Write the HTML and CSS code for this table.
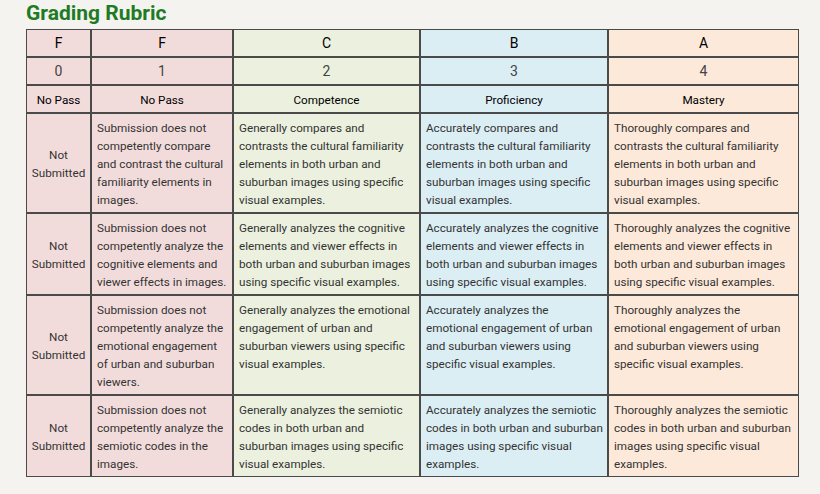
FILE: index.html
```html
<!DOCTYPE html>
<html>
<head>
<meta charset="utf-8">
<link rel="stylesheet" href="styles.css">
</head>
<body>
<div class="page">
  <h2 class="title">Grading Rubric</h2>
  <table class="rubric">
    <colgroup>
      <col class="c1"><col class="c2"><col class="c3"><col class="c4"><col class="c5">
    </colgroup>
    <thead>
      <tr class="grade">
        <th class="f">F</th><th class="f">F</th><th class="c">C</th><th class="b">B</th><th class="a">A</th>
      </tr>
      <tr class="points">
        <th class="f">0</th><th class="f">1</th><th class="c">2</th><th class="b">3</th><th class="a">4</th>
      </tr>
      <tr class="level">
        <th class="f">No Pass</th><th class="f">No Pass</th><th class="c">Competence</th><th class="b">Proficiency</th><th class="a">Mastery</th>
      </tr>
    </thead>
    <tbody>
      <tr>
        <td class="f ns">Not Submitted</td>
        <td class="f np">Submission does not competently compare and contrast the cultural familiarity elements in images.</td>
        <td class="c">Generally compares and contrasts the cultural familiarity elements in both urban and suburban images using specific visual examples.</td>
        <td class="b">Accurately compares and contrasts the cultural familiarity elements in both urban and suburban images using specific visual examples.</td>
        <td class="a">Thoroughly compares and contrasts the cultural familiarity elements in both urban and suburban images using specific visual examples.</td>
      </tr>
      <tr>
        <td class="f ns">Not Submitted</td>
        <td class="f np">Submission does not competently analyze the cognitive elements and viewer effects in images.</td>
        <td class="c">Generally analyzes the cognitive elements and viewer effects in both urban and suburban images using specific visual examples.</td>
        <td class="b">Accurately analyzes the cognitive elements and viewer effects in both urban and suburban images using specific visual examples.</td>
        <td class="a">Thoroughly analyzes the cognitive elements and viewer effects in both urban and suburban images using specific visual examples.</td>
      </tr>
      <tr>
        <td class="f ns">Not Submitted</td>
        <td class="f np">Submission does not competently analyze the emotional engagement of urban and suburban viewers.</td>
        <td class="c">Generally analyzes the emotional engagement of urban and suburban viewers using specific visual examples.</td>
        <td class="b">Accurately analyzes the emotional engagement of urban and suburban viewers using specific visual examples.</td>
        <td class="a">Thoroughly analyzes the emotional engagement of urban and suburban viewers using specific visual examples.</td>
      </tr>
      <tr>
        <td class="f ns">Not Submitted</td>
        <td class="f np">Submission does not competently analyze the semiotic codes in the images.</td>
        <td class="c">Generally analyzes the semiotic codes in both urban and suburban images using specific visual examples.</td>
        <td class="b">Accurately analyzes the semiotic codes in both urban and suburban images using specific visual examples.</td>
        <td class="a">Thoroughly analyzes the semiotic codes in both urban and suburban images using specific visual examples.</td>
      </tr>
    </tbody>
  </table>
</div>
</body>
</html>
```

FILE: styles.css
```css
html, body {
  margin: 0;
  padding: 0;
  background: #f4f3ef;
}
body {
  font-family: Roboto, "Liberation Sans", sans-serif;
  color: #333;
}
.page {
  padding: 1px 0 0 26px;
}
.title {
  margin: 0 0 4px 0;
  font-size: 21px;
  line-height: 24px;
  font-weight: 700;
  color: #1e7b24;
}
.rubric {
  border-collapse: separate;
  border-spacing: 0;
  table-layout: fixed;
  width: 773px;
}
.c1 { width: 65px; }
.c2 { width: 142px; }
.c3 { width: 187px; }
.c4 { width: 188px; }
.c5 { width: 191px; }
.rubric th,
.rubric td {
  border: 1px solid #4a4a4a;
  font-size: 11.7px;
  line-height: 18px;
}
.rubric td {
  padding: 5px 6px 3px 5px;
  vertical-align: top;
  text-align: left;
}
.rubric td.np { padding-right: 5px; }
.rubric td.c { padding-right: 8px; }
.rubric td.b { padding-right: 4px; }
.rubric td.a { padding-right: 6px; }
.rubric th {
  padding: 4px 2px;
  text-align: center;
  font-weight: 400;
  color: #000;
}
.rubric .grade th {
  font-size: 14px;
  color: #000;
}
.rubric .points th {
  font-size: 14px;
  font-weight: 400;
  color: #444;
}
.rubric .level th {
  padding: 5px 2px 3px;
  font-weight: 400;
  color: #000;
}
.rubric td.ns {
  padding: 5px 2px 3px;
  text-align: center;
  vertical-align: middle;
}
.f { background: #f2dcdb; }
.c { background: #ebf1de; }
.b { background: #dbeef4; }
.a { background: #fde9d9; }
```
